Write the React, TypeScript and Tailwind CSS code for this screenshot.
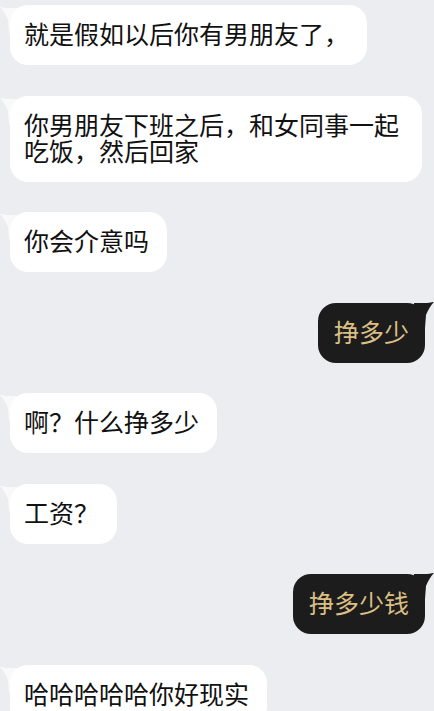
type Msg = { side: "left" | "right"; text: string }

const messages: Msg[] = [
  { side: "left", text: "就是假如以后你有男朋友了，" },
  { side: "left", text: "你男朋友下班之后，和女同事一起吃饭，然后回家" },
  { side: "left", text: "你会介意吗" },
  { side: "right", text: "挣多少" },
  { side: "left", text: "啊？什么挣多少" },
  { side: "left", text: "工资？" },
  { side: "right", text: "挣多少钱" },
  { side: "left", text: "哈哈哈哈哈你好现实" },
]

function LeftBubble({ text }: { text: string }) {
  return (
    <div className="relative ml-[10px] self-start max-w-[412px]">
      {/* tail */}
      <svg
        className="absolute -left-[10px] top-[2px] opacity-70"
        width="20"
        height="26"
        viewBox="0 0 20 26"
      >
        <path d="M20 1 L10 1 C6 1 3 0.5 0 0 C3 3 6 8 8 13 L9 26 L20 26 Z" fill="#ffffff" />
      </svg>
      <div className="relative rounded-[18px] bg-white pl-[14px] pr-[18px] pt-[15px] pb-[19px] text-[25px] leading-[26px] text-[#111111]">
        {text}
      </div>
    </div>
  )
}

function RightBubble({ text }: { text: string }) {
  return (
    <div className="relative mr-[9px] self-end">
      <svg
        className="absolute -right-[9px] -top-[1px]"
        width="20"
        height="26"
        viewBox="0 0 20 26"
      >
        <path d="M0 1 L10 1 C14 1 17 0.5 20 0 C17 3 14 8 12 13 L11 26 L0 26 Z" fill="#1c1c1c" />
      </svg>
      <div className="relative rounded-[18px] bg-[#1c1c1c] px-[16px] pt-[15px] pb-[19px] text-[25px] leading-[26px] text-[#dbbf84]">
        {text}
      </div>
    </div>
  )
}

export default function App() {
  return (
    <div
      className="h-[711px] w-[434px] overflow-hidden bg-[#ecedf1]"
      style={{ fontFamily: '"Noto Sans CJK SC", "Noto Sans", sans-serif' }}
    >
      <div className="flex flex-col gap-[30.5px] pt-[5px]">
        {messages.map((m, i) =>
          m.side === "left" ? (
            <LeftBubble key={i} text={m.text} />
          ) : (
            <RightBubble key={i} text={m.text} />
          )
        )}
      </div>
    </div>
  )
}
